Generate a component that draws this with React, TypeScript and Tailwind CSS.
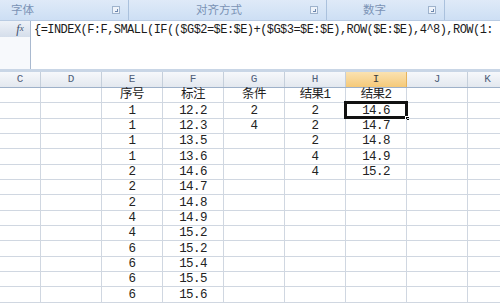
const COLS = [
  { id: 'C', w: 41 },
  { id: 'D', w: 61 },
  { id: 'E', w: 61 },
  { id: 'F', w: 61 },
  { id: 'G', w: 61 },
  { id: 'H', w: 61 },
  { id: 'I', w: 61 },
  { id: 'J', w: 61 },
  { id: 'K', w: 40 },
]

// E..I, 每行
const ROWS: string[][] = [
  ['序号', '标注', '条件', '结果1', '结果2'],
  ['1', '12.2', '2', '2', '14.6'],
  ['1', '12.3', '4', '2', '14.7'],
  ['1', '13.5', '', '2', '14.8'],
  ['1', '13.6', '', '4', '14.9'],
  ['2', '14.6', '', '4', '15.2'],
  ['2', '14.7', '', '', ''],
  ['2', '14.8', '', '', ''],
  ['4', '14.9', '', '', ''],
  ['4', '15.2', '', '', ''],
  ['6', '15.2', '', '', ''],
  ['6', '15.4', '', '', ''],
  ['6', '15.5', '', '', ''],
  ['6', '15.6', '', '', ''],
]

const FORMULA = '{=INDEX(F:F,SMALL(IF(($G$2=$E:$E)+($G$3=$E:$E),ROW($E:$E),4^8),ROW(1:'

function Launcher() {
  return (
    <span className="relative block h-[8px] w-[8px] border border-[#9fb3cc] bg-[#eef3fa]">
      <span className="absolute right-[1px] bottom-[1px] h-[3px] w-[3px] border-r border-b border-[#6b86ad]" />
    </span>
  )
}

function Group({ label, w, pl }: { label: string; w: number | string; pl: number }) {
  return (
    <div
      className="flex h-full shrink-0 items-center border-r border-[#aac1dd] bg-gradient-to-b from-[#dfeaf8] to-[#cddff4] pr-[8px]"
      style={{ width: w }}
    >
      <span className="flex-1 text-[11.5px] text-[#7b93b5]" style={{ paddingLeft: pl }}>
        {label}
      </span>
      <Launcher />
    </div>
  )
}

export default function App() {
  return (
    <div className="h-[304px] w-[500px] overflow-hidden bg-white font-['Liberation_Mono','Noto_Sans_CJK_SC',monospace]">
      {/* ribbon group labels */}
      <div className="flex h-[20px] font-['Noto_Sans_CJK_SC',sans-serif]">
        <Group label="字体" w={129} pl={11} />
        <Group label="对齐方式" w={198} pl={67} />
        <Group label="数字" w={118} pl={36} />
        <div className="h-full flex-1 bg-gradient-to-b from-[#dfeaf8] to-[#cddff4]" />
      </div>

      {/* formula bar */}
      <div className="flex h-[52px] border-t border-b-[3px] border-t-[#b9cbe2] border-b-[#c9d6e6]">
        <div className="flex w-[31px] flex-col border-r border-[#a9b9cf]">
          <div className="flex h-[16px] items-center justify-center bg-gradient-to-b from-[#eef2f8] to-[#d5deeb] pl-[10px] font-['Liberation_Serif',serif] text-[12px] italic text-[#3c4f6e]">
            f<span className="text-[9px]">x</span>
          </div>
          <div className="flex-1 bg-[#f7f9fc]" />
        </div>
        <div className="flex-1 overflow-hidden whitespace-nowrap pt-[2px] pl-[3px] text-[12px] leading-[14px] tracking-[-0.55px] text-[#1a1a1a]">
          {FORMULA}
        </div>
      </div>

      {/* grid */}
      <div className="flex flex-col">
        <div className="flex h-[16px] border-b border-[#9eb1c9]">
          {COLS.map((c) => (
            <div
              key={c.id}
              className={`flex shrink-0 items-center justify-center border-r text-[11px] ${
                c.id === 'I'
                  ? 'border-[#e6b35c] bg-gradient-to-b from-[#fae2b1] to-[#f5c978] text-[#3b3b3b]'
                  : 'border-[#c5cfdb] bg-gradient-to-b from-[#f6f8fb] to-[#e3e8ef] text-[#50607a]'
              }`}
              style={{ width: c.w }}
            >
              {c.id}
            </div>
          ))}
        </div>
        {ROWS.map((r, ri) => (
          <div key={ri} className="flex h-[15.33px]">
            {COLS.map((c) => {
              const idx = ['E', 'F', 'G', 'H', 'I'].indexOf(c.id)
              const v = idx >= 0 ? r[idx] : ''
              const active = ri === 1 && c.id === 'I'
              return (
                <div
                  key={c.id}
                  className="relative flex shrink-0 items-end justify-center border-r border-b border-[#d0d7e1] text-[12.5px] leading-[14px] tracking-[-0.6px] text-[#222]"
                  style={{ width: c.w }}
                >
                  {v}
                  {active && (
                    <>
                      <span className="absolute -top-[2px] -left-[2px] right-[-2px] bottom-[-1px] border-[3px] border-[#111]" />
                      <span className="absolute right-[-4px] bottom-[-3px] h-[5px] w-[5px] border border-white bg-black" />
                    </>
                  )}
                </div>
              )
            })}
          </div>
        ))}
      </div>
    </div>
  )
}
